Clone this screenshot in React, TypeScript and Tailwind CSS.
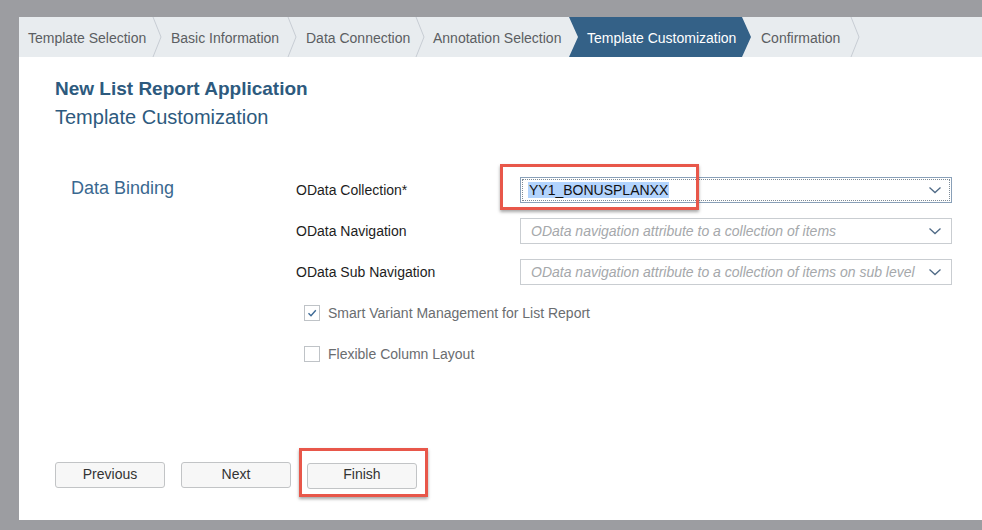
import React from "react";

const Sep = () => (
  <svg width="10" height="40" viewBox="0 0 10 40" className="shrink-0">
    <polyline points="1,0 9,20 1,40" fill="none" stroke="#c7cdd3" strokeWidth="1" />
  </svg>
);

const Step = ({ w, pl, label }: { w: number; pl: number; label: string }) => (
  <div className="flex h-10 shrink-0 items-center whitespace-nowrap pt-[2px]" style={{ width: w, paddingLeft: pl }}>
    {label}
  </div>
);

const Chevron = () => (
  <svg width="14" height="14" viewBox="0 0 14 14" className="shrink-0">
    <polyline points="1.5,4.5 7,9.5 12.5,4.5" fill="none" stroke="#4f6a86" strokeWidth="1.3" />
  </svg>
);

const Select = ({ placeholder }: { placeholder: string }) => (
  <div className="flex h-[26px] w-[432px] items-center border border-[#c9cdd1] bg-white pl-[10px] pr-[9px]">
    <span className="flex-1 overflow-hidden whitespace-nowrap text-[14px] italic text-[#a5a8ab]">{placeholder}</span>
    <Chevron />
  </div>
);

const Label = ({ children }: { children: React.ReactNode }) => (
  <div className="flex h-[26px] w-[224px] items-center text-[14px] text-[#1d1d1d]">{children}</div>
);

export default function App() {
  return (
    <div
      className="flex h-[530px] w-[982px] flex-col bg-[#9c9da1] pb-[10px] pl-[19px] pt-[17px]"
      style={{ fontFamily: '"Liberation Sans", Arial, sans-serif' }}
    >
      <div className="flex flex-1 flex-col bg-white">
        {/* step bar */}
        <div className="flex h-10 bg-[#e8ecef] text-[14px] text-[#5b5e62]">
          <Step w={133} pl={9} label="Template Selection" />
          <Sep />
          <Step w={125} pl={9} label="Basic Information" />
          <Sep />
          <Step w={118} pl={9} label="Data Connection" />
          <Sep />
          <Step w={144} pl={8} label="Annotation Selection" />
          <div className="flex h-10 w-[182px] shrink-0 items-center whitespace-nowrap bg-[#346187] pl-[18px] pt-[2px] text-white [clip-path:polygon(0_0,173px_0,182px_50%,173px_100%,0_100%,9px_50%)]">
            Template Customization
          </div>
          <Step w={99} pl={10} label="Confirmation" />
          <Sep />
        </div>

        {/* content */}
        <div className="flex flex-col pl-[36px] pt-[21px]">
          <div className="text-[19px] font-bold leading-[22px] text-[#2d5a7e]">New List Report Application</div>
          <div className="mt-[4px] text-[20px] leading-[26px] text-[#2d5a7e]">Template Customization</div>

          <div className="mt-[47px] flex">
            <div className="w-[241px] pl-[16px]">
              <div className="flex h-[22px] items-center text-[18px] text-[#3a6890]">Data Binding</div>
            </div>
            <div className="flex flex-col gap-[15px]">
              <div className="flex">
                <Label>OData Collection*</Label>
                <div className="relative">
                  <div className="flex h-[26px] w-[432px] items-center border border-[#89a0b8] bg-white pl-[7px] pr-[9px] outline-1 outline-dotted outline-offset-[-3px] outline-[#7d8a96]">
                    <span className="flex-1 whitespace-nowrap text-[14px] text-[#111]">
                      <span className="bg-[#b3d4fd] px-[1px]">YY1_BONUSPLANXX</span>
                    </span>
                    <Chevron />
                  </div>
                  <div className="pointer-events-none absolute left-[-20px] top-[-13px] h-[46px] w-[199px] border-[3px] border-[#e8574a] shadow-[0_2px_3px_rgba(0,0,0,0.35)]" />
                </div>
              </div>
              <div className="flex">
                <Label>OData Navigation</Label>
                <Select placeholder="OData navigation attribute to a collection of items" />
              </div>
              <div className="flex">
                <Label>OData Sub Navigation</Label>
                <Select placeholder="OData navigation attribute to a collection of items on sub level" />
              </div>
              <div className="flex h-[26px] items-center pl-[8px] text-[14px] text-[#6a6d70]">
                <div className="flex h-4 w-4 items-center justify-center border border-[#bfc3c7] bg-white">
                  <svg width="12" height="12" viewBox="0 0 12 12">
                    <polyline points="2.5,6.2 5,8.7 9.8,3.2" fill="none" stroke="#3d6a96" strokeWidth="1.4" />
                  </svg>
                </div>
                <span className="ml-[8px]">Smart Variant Management for List Report</span>
              </div>
              <div className="flex h-[26px] items-center pl-[8px] text-[14px] text-[#6a6d70]">
                <div className="h-4 w-4 border border-[#bfc3c7] bg-white" />
                <span className="ml-[8px]">Flexible Column Layout</span>
              </div>
            </div>
          </div>

          <div className="mt-[95px] flex gap-[16px]">
            <button className="h-[26px] w-[110px] rounded-[3px] border border-[#c2c4c6] bg-[#f7f7f7] pb-[2px] text-[14px] text-[#333]">Previous</button>
            <button className="h-[26px] w-[110px] rounded-[3px] border border-[#c2c4c6] bg-[#f7f7f7] pb-[2px] text-[14px] text-[#333]">Next</button>
            <div className="relative">
              <button className="h-[26px] w-[110px] rounded-[3px] border border-[#c2c4c6] bg-[#f7f7f7] pb-[2px] text-[14px] text-[#333]">Finish</button>
              <div className="pointer-events-none absolute left-[-8px] top-[-14px] h-[49px] w-[129px] border-[3px] border-[#e8574a] shadow-[0_2px_3px_rgba(0,0,0,0.35)]" />
            </div>
          </div>
        </div>
      </div>
    </div>
  );
}
